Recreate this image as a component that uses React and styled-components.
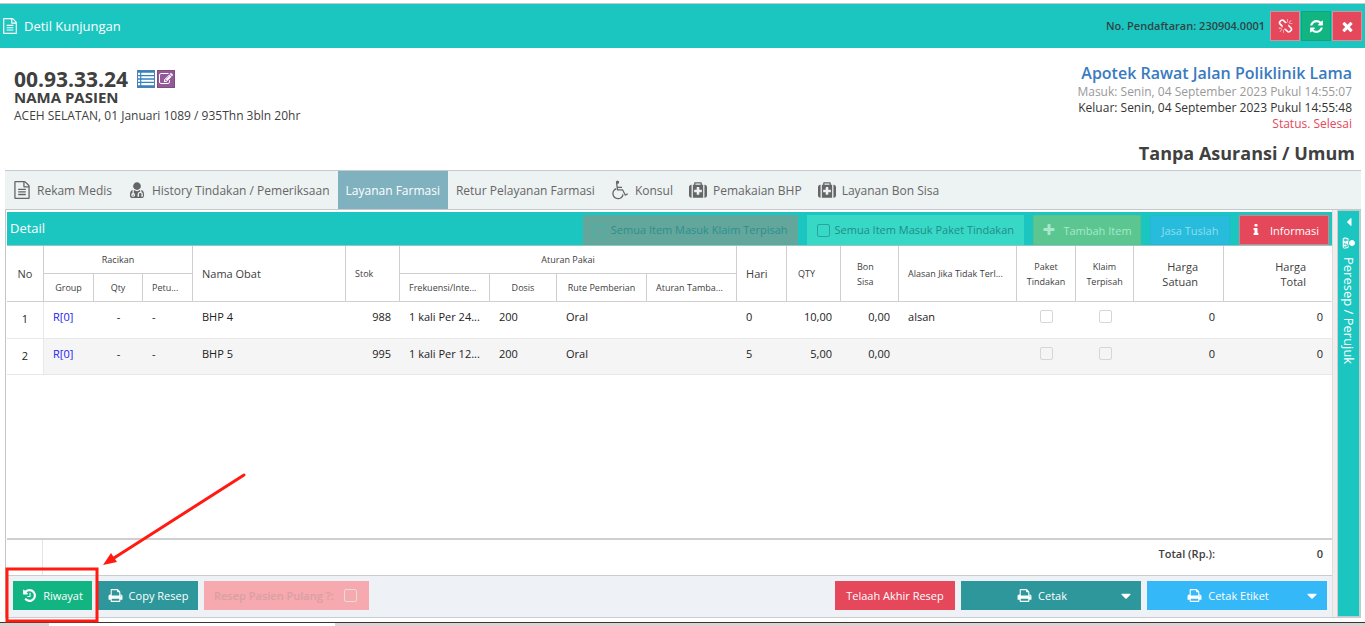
import React from 'react';
import styled, { createGlobalStyle, css } from 'styled-components';

const GlobalStyle = createGlobalStyle`
    * {
        box-sizing: border-box;
    }

    body {
        margin: 0;
        background-color: #fff;
        color: #404040;
        font-family: "Open Sans", "Noto Sans", sans-serif;
        font-size: 13px;
        line-height: 18px;
    }

    button, input {
        font-family: inherit;
    }
`;

const ICONS = {
    file: 'M1596 380q28 28 48 76t20 88v1152q0 40-28 68t-68 28h-1344q-40 0-68-28t-28-68v-1600q0-40 28-68t68-28h896q40 0 88 20t76 48zm-444-244v376h376q-10-29-22-41l-313-313q-12-12-41-22zm384 1528v-1024h-416q-40 0-68-28t-28-68v-416h-768v1536h1280zm-1024-864q0-14 9-23t23-9h704q14 0 23 9t9 23v64q0 14-9 23t-23 9h-704q-14 0-23-9t-9-23v-64zm736 224q14 0 23 9t9 23v64q0 14-9 23t-23 9h-704q-14 0-23-9t-9-23v-64q0-14 9-23t23-9h704zm0 256q14 0 23 9t9 23v64q0 14-9 23t-23 9h-704q-14 0-23-9t-9-23v-64q0-14 9-23t23-9h704z',
    doctor: 'M576 1408q0 26-19 45t-45 19-45-19-19-45 19-45 45-19 45 19 19 45zm1024 37q0 121-73 190t-194 69h-874q-121 0-194-69t-73-190q0-68 5.500-131t24-138 47.500-132.500 81-103 120-60.500q-22 52-22 120v203q-58 20-93 70t-35 111q0 80 56 136t136 56 136-56 56-136q0-61-35.500-111t-92.500-70v-203q0-62 25-93 132 104 295 104t295-104q25 31 25 93v64q-106 0-181 75t-75 181v89q-32 29-32 71 0 40 28 68t68 28 68-28 28-68q0-42-32-71v-89q0-52 38-90t90-38 90 38 38 90v89q-32 29-32 71 0 40 28 68t68 28 68-28 28-68q0-42-32-71v-89q0-68-34.500-127.500t-93.500-93.500q0-10 .5-42.500t0-48-2.500-41.500-7-47-13-40q68 15 120 60.500t81 103 47.500 132.500 24 138 5.500 131zm-320-933q0 159-112.500 271.500t-271.500 112.500-271.500-112.500-112.500-271.500 112.500-271.500 271.500-112.500 271.500 112.500 112.500 271.500z',
    times: 'M1490 1322q0 40-28 68l-136 136q-28 28-68 28t-68-28l-294-294-294 294q-28 28-68 28t-68-28l-136-136q-28-28-28-68t28-68l294-294-294-294q-28-28-28-68t28-68l136-136q28-28 68-28t68 28l294 294 294-294q28-28 68-28t68 28l136 136q28 28 28 68t-28 68l-294 294 294 294q28 28 28 68z',
    refresh: 'M1639 1056q0 5-1 7-64 268-268 434.500t-478 166.500q-146 0-282.500-55t-243.500-157l-129 129q-19 19-45 19t-45-19-19-45v-448q0-26 19-45t45-19h448q26 0 45 19t19 45-19 45l-137 137q71 66 161 102t187 36q134 0 250-65t186-179q11-17 53-117 8-23 30-23h192q13 0 22.500 9.500t9.500 22.500zm25-800v448q0 26-19 45t-45 19h-448q-26 0-45-19t-19-45 19-45l138-138q-148-137-349-137-134 0-250 65t-186 179q-11 17-53 117-8 23-30 23h-199q-13 0-22.500-9.500t-9.500-22.500v-7q65-268 270-434.500t480-166.500q146 0 284 55.500t245 156.500l130-129q19-19 45-19t45 19 19 45z',
    unlink: 'M503 1271l-256 256q-10 9-23 9-12 0-23-9-9-10-9-23t9-23l256-256q10-9 23-9t23 9q9 10 9 23t-9 23zm169 41v320q0 14-9 23t-23 9-23-9-9-23v-320q0-14 9-23t23-9 23 9 9 23zm-224-224q0 14-9 23t-23 9h-320q-14 0-23-9t-9-23 9-23 23-9h320q14 0 23 9t9 23zm1264 128q0 120-85 203l-147 146q-83 83-203 83-121 0-204-85l-334-335q-21-21-42-56l239-18 273 274q28 28 68 27.500t68-27.500l147-146q28-28 28-67 0-40-28-68l-274-275 18-239q35 21 56 42l336 336q84 86 84 204zm-617-724l-239 18-273-274q-28-28-68-28-39 0-68 27l-147 146q-28 28-28 67 0 40 28 68l274 274-18 240q-35-21-56-42l-336-336q-84-86-84-204 0-120 85-203l147-146q83-83 203-83 121 0 204 85l334 335q21 21 42 56zm633 84q0 14-9 23t-23 9h-320q-14 0-23-9t-9-23 9-23 23-9h320q14 0 23 9t9 23zm-544-544v320q0 14-9 23t-23 9-23-9-9-23v-320q0-14 9-23t23-9 23 9 9 23zm407 151l-256 256q-11 9-23 9t-23-9q-9-10-9-23t9-23l256-256q10-9 23-9t23 9q9 10 9 23t-9 23z',
    list: 'M0 200h240v240h-240zM370 200h1422v240h-1422zM0 584h240v240h-240zM370 584h1422v240h-1422zM0 968h240v240h-240zM370 968h1422v240h-1422zM0 1352h240v240h-240zM370 1352h1422v240h-1422z',
    edit: 'M888 1184l116-116-152-152-116 116v56h96v96h56zm440-720q-16-16-33 1l-350 350q-17 17-1 33t33-1l350-350q17-17 1-33zm80 594v190q0 119-84.500 203.500t-203.500 84.500h-832q-119 0-203.500-84.500t-84.500-203.500v-832q0-119 84.500-203.500t203.500-84.500h832q63 0 117 25 15 7 18 23 3 17-9 29l-49 49q-14 14-32 8-23-6-45-6h-832q-66 0-113 47t-47 113v832q0 66 47 113t113 47h832q66 0 113-47t47-113v-126q0-13 9-22l64-64q15-15 35-7t20 29zm-96-738l288 288-672 672h-288v-288zm444 132l-92 92-288-288 92-92q28-28 68-28t68 28l152 152q28 28 28 68t-28 68z',
    wheelchair: 'M1151 1221l102 204q-58 179-210 290t-339 111q-156 0-289.500-77.500t-211-211-77.500-289.500q0-181 104.500-330t274.500-211l17 131q-122 54-195 165.500t-73 244.500q0 185 131.500 316.500t316.500 131.500q126 0 232.500-65t165-175.500 49.500-236.500zm492-6l58 114-256 128q-13 7-29 7-40 0-57-35l-239-477h-472q-24 0-42.500-16.500t-21.500-40.500l-96-779q-2-17 6-42 14-51 57-82.500t97-31.500q66 0 113 47t47 113q0 69-52 117.500t-120 41.500l37 289h423v128h-407l16 128h455q40 0 57 35l228 455z',
    medkit: 'M1280 1088v-192q0-14-9-23t-23-9h-224v-224q0-14-9-23t-23-9h-192q-14 0-23 9t-9 23v224h-224q-14 0-23 9t-9 23v192q0 14 9 23t23 9h224v224q0 14 9 23t23 9h192q14 0 23-9t9-23v-224h224q14 0 23-9t9-23zm-640-704h512v-128h-512v128zm-384 0v1280h-32q-92 0-158-66t-66-158v-832q0-92 66-158t158-66h32zm1152 0v1280h-1024v-1280h128v-160q0-40 28-68t68-28h576q40 0 68 28t28 68v160h128zm384 224v832q0 92-66 158t-158 66h-32v-1280h32q92 0 158 66t66 158z',
    plus: 'M1600 736v192q0 40-28 68t-68 28h-416v416q0 40-28 68t-68 28h-192q-40 0-68-28t-28-68v-416h-416q-40 0-68-28t-28-68v-192q0-40 28-68t68-28h416v-416q0-40 28-68t68-28h192q40 0 68 28t28 68v416h416q40 0 68 28t28 68z',
    info: 'M1216 1344v128q0 26-19 45t-45 19h-512q-26 0-45-19t-19-45v-128q0-26 19-45t45-19h64v-384h-64q-26 0-45-19t-19-45v-128q0-26 19-45t45-19h384q26 0 45 19t19 45v576h64q26 0 45 19t19 45zm-128-1152v192q0 26-19 45t-45 19h-256q-26 0-45-19t-19-45v-192q0-26 19-45t45-19h256q26 0 45 19t19 45z',
    print: 'M448 1536h896v-256h-896v256zm0-640h896v-384h-160q-40 0-68-28t-28-68v-160h-640v640zm1152 64q0-26-19-45t-45-19-45 19-19 45 19 45 45 19 45-19 19-45zm128 0v416q0 13-9.500 22.500t-22.500 9.500h-224v160q0 40-28 68t-68 28h-960q-40 0-68-28t-28-68v-160h-224q-13 0-22.500-9.500t-9.500-22.500v-416q0-79 56.500-135.500t135.500-56.500h64v-544q0-40 28-68t68-28h672q40 0 88 20t76 48l152 152q28 28 48 76t20 88v256h64q79 0 135.500 56.500t56.500 135.500z',
    history: 'M1664 896q0 156-61 298t-164 245-245 164-298 61q-172 0-327-72.500t-264-204.500q-7-10-6.500-22.500t8.500-20.500l137-138q10-9 25-9 16 2 23 12 73 95 179 147t225 52q104 0 198.500-40.500t163.500-109.500 109.500-163.500 40.500-198.500-40.500-198.500-109.500-163.500-163.500-109.500-198.500-40.500q-98 0-188 35.500t-160 101.500l137 138q31 30 14 69-17 40-59 40h-448q-26 0-45-19t-19-45v-448q0-42 40-59 39-17 69 14l130 129q107-101 244.500-156.500t284.500-55.500q156 0 298 61t245 164 164 245 61 298zm-640-288v448q0 14-9 23t-23 9h-320q-14 0-23-9t-9-23v-64q0-14 9-23t23-9h224v-352q0-14 9-23t23-9h64q14 0 23 9t9 23z',
    down: 'M1408 704q0 26-19 45l-448 448q-19 19-45 19t-45-19l-448-448q-19-19-19-45t19-45 45-19h896q26 0 45 19t19 45z',
    left: 'M1216 448v896q0 26-19 45t-45 19-45-19l-448-448q-19-19-19-45t19-45l448-448q19-19 45-19t45 19 19 45z',
};

const Svg = styled.svg`
    flex: none;
    display: block;
    width: ${(p) => p.$size}px;
    height: ${(p) => p.$size}px;
    fill: currentColor;
    overflow: visible;
`;

function Icon({ name, size = 16 }) {
    return (
        <Svg $size={size} viewBox="0 0 1792 1792" aria-hidden="true">
            <path d={ICONS[name]} />
        </Svg>
    );
}

const Page = styled.div`
    position: relative;
    display: flex;
    flex-direction: column;
    min-height: 100vh;
    padding-top: 3px;
`;

/* ---------- title bar ---------- */

const TitleBar = styled.header`
    display: flex;
    align-items: center;
    height: 45px;
    padding: 0 3px 0 2px;
    border-top: 1px solid #c4cccc;
    background-color: #1bc6c1;
    color: #fff;
`;

const Title = styled.h1`
    display: flex;
    align-items: center;
    gap: 6px;
    flex: 1;
    margin: 0;
    font-size: 13px;
    font-weight: 400;
`;

const RegNumber = styled.span`
    margin-right: 5px;
    color: #2f4546;
    font-size: 11px;
    font-weight: 600;
`;

const Tools = styled.div`
    display: flex;
    gap: 1px;
`;

const ToolButton = styled.button`
    display: flex;
    align-items: center;
    justify-content: center;
    width: 30px;
    height: 30px;
    padding: 0;
    border: 1px solid ${(p) => p.$border};
    background-color: ${(p) => p.$bg};
    color: #fff;
`;

/* ---------- patient ---------- */

const Patient = styled.section`
    display: flex;
    justify-content: space-between;
    height: 122px;
    padding: 16px 10px 0 14px;
`;

const Identity = styled.div`
    padding-top: 4px;
`;

const NumberLine = styled.div`
    display: flex;
    align-items: center;
    gap: 9px;
    height: 22px;
`;

const RecordNumber = styled.strong`
    font-size: 21px;
    font-weight: 700;
    line-height: 22px;
`;

const RecordActions = styled.div`
    display: flex;
    gap: 2px;
`;

const SquareButton = styled.button`
    display: flex;
    align-items: center;
    justify-content: center;
    width: 18px;
    height: 18px;
    padding: 0;
    border: 1px solid ${(p) => p.$border};
    background-color: ${(p) => p.$bg};
    color: #fff;
`;

const PatientName = styled.div`
    font-size: 15px;
    font-weight: 700;
    line-height: 15px;
`;

const PatientInfo = styled.div`
    font-size: 12px;
    line-height: 22px;
`;

const Visit = styled.div`
    text-align: right;
`;

const VisitDetail = styled.div`
    padding-right: 3px;
    font-size: 12px;
    line-height: 16px;
`;

const Unit = styled.div`
    margin-bottom: 2px;
    color: #3a7abf;
    font-size: 16px;
    font-weight: 600;
    line-height: 18px;
`;

const VisitLine = styled.div`
    color: ${(p) => p.$color};
`;

const Insurance = styled.div`
    margin-top: 9px;
    font-size: 18px;
    font-weight: 700;
    line-height: 24px;
`;

/* ---------- tabs ---------- */

const Tabs = styled.nav`
    display: flex;
    height: 40px;
    margin: 0 4px 0 5px;
    border-top: 1px solid #c5cbcc;
    border-bottom: 1px solid #c5c9ca;
    background-color: #edf2f2;
`;

const Tab = styled.button`
    display: flex;
    align-items: center;
    gap: 6px;
    padding: 0 8px;
    border: 0;
    background-color: ${(p) => (p.$active ? '#7fb1bf' : 'transparent')};
    color: ${(p) => (p.$active ? '#fff' : '#666')};
    font-size: 12px;
    white-space: nowrap;
`;

/* ---------- main panel ---------- */

const Body = styled.main`
    display: flex;
    flex: 1;
    margin: 0 4px 0 5px;
    border-left: 1px solid #c5c5c5;
    border-bottom: 1px solid #c9cdd0;
`;

const Panel = styled.section`
    display: flex;
    flex: 1;
    flex-direction: column;
    min-width: 0;
    padding: 2px 0 0 1px;
`;

const Splitter = styled.div`
    width: 6px;
    border-left: 1px solid #ddd;
    border-right: 1px solid #d5c9c9;
    background-color: #eeeeee;
`;

const PanelHead = styled.div`
    display: flex;
    align-items: flex-end;
    height: 34px;
    padding: 0 3px;
    border-bottom: 1px solid #8fc9c7;
    background-color: #1bc6c1;
`;

const PanelTitle = styled.h2`
    flex: 1;
    margin: 0;
    color: #fff;
    font-size: 13px;
    font-weight: 400;
    line-height: 34px;
`;

const PanelTools = styled.div`
    display: flex;
    gap: 9px;
    height: 30px;
`;

const CheckField = styled.label`
    display: flex;
    align-items: center;
    gap: 5px;
    padding: 0 10px;
    background-color: ${(p) => p.$bg};
    color: ${(p) => p.$color};
    font-size: 11px;
    font-weight: ${(p) => p.$weight || 400};
    white-space: nowrap;
`;

const Check = styled.input.attrs({ type: 'checkbox' })`
    appearance: none;
    flex: none;
    width: 13px;
    height: 13px;
    margin: 0;
    border: 1px solid ${(p) => p.$border || '#d6d6d6'};
    border-radius: 2px;
    background-color: transparent;
`;

const HeadButton = styled.button`
    display: flex;
    align-items: center;
    justify-content: center;
    gap: 7px;
    width: ${(p) => p.$width}px;
    padding: 0;
    border: 1px solid ${(p) => p.$border};
    background-color: ${(p) => p.$bg};
    color: ${(p) => p.$color || '#fff'};
    font-size: 11px;
    white-space: nowrap;
`;

/* ---------- table ---------- */

const Table = styled.table`
    width: 100%;
    border-collapse: separate;
    border-spacing: 0;
    table-layout: fixed;
`;

const Th = styled.th`
    height: 28px;
    padding: 0 ${(p) => p.$padRight || 9}px 0 ${(p) => p.$padLeft || 9}px;
    border-right: 1px solid ${(p) => (p.$last ? 'transparent' : '#cfcfcf')};
    border-bottom: 1px solid #cfcfcf;
    color: #404040;
    font-size: ${(p) => (p.$large ? 11 : 9)}px;
    font-weight: 400;
    line-height: 15px;
    text-align: ${(p) => p.$align || 'left'};
    white-space: nowrap;
`;

const Td = styled.td`
    height: ${(p) => (p.$tall ? 37 : 36)}px;
    padding: 7px 9px 0;
    border-bottom: 1px solid #e8e8e8;
    background-color: ${(p) => (p.$alt ? '#f5f5f5' : '#fff')};
    color: #222;
    font-size: 11px;
    line-height: 15px;
    text-align: ${(p) => p.$align || 'left'};
    vertical-align: top;
    white-space: nowrap;

    ${(p) => p.$number && css`
        padding: 9px 0 0;
        border-right: 1px solid #e8e8e8;
        background-color: #fff;
        text-align: center;
    `}
`;

const GroupLink = styled.a`
    color: #1c1cf0;
    text-decoration: none;
`;

const CellCheck = styled(Check)`
    display: block;
    margin: 1px auto 0;
`;

const Blank = styled.div`
    flex: 1;
`;

const Summary = styled.div`
    display: flex;
    height: 37px;
    border-top: 2px solid #cfcfcf;
    color: #404040;
    font-size: 11px;
    font-weight: 600;
    line-height: 28px;
`;

const SummaryGutter = styled.div`
    width: 36px;
    border-right: 1px solid #e4e4e4;
`;

const SummaryLabel = styled.div`
    flex: 1;
    text-align: right;
`;

const SummaryValue = styled.div`
    width: 117px;
    padding-right: 9px;
    text-align: right;
`;

/* ---------- bottom toolbar ---------- */

const BottomBar = styled.footer`
    display: flex;
    align-items: flex-start;
    height: 42px;
    padding: 5px 5px 0 6px;
    border-top: 1px solid #c9cdd0;
    background-color: #eef2f7;
`;

const ActionButton = styled.button`
    display: flex;
    align-items: center;
    justify-content: center;
    gap: 6px;
    width: ${(p) => p.$width}px;
    height: 29px;
    margin-right: 6px;
    padding: 0 7px;
    border: 0;
    background-color: ${(p) => p.$bg};
    color: #fff;
    font-size: 11px;
    white-space: nowrap;

    &:last-child {
        margin-right: 0;
    }
`;

const MenuLabel = styled.span`
    display: flex;
    flex: 1;
    align-items: center;
    justify-content: center;
    gap: 6px;
    padding-left: 4px;
`;

const PulangField = styled(CheckField)`
    justify-content: space-between;
    width: 165px;
    height: 29px;
    padding: 0 12px 0 10px;
`;

const Spacer = styled.div`
    flex: 1;
`;

/* ---------- collapsed side panel ---------- */

const Side = styled.aside`
    display: flex;
    flex-direction: column;
    align-items: center;
    gap: 7px;
    width: 23px;
    padding-top: 4px;
    border: 1px solid #b8cfce;
    border-left: 0;
    border-right-width: 2px;
    background-color: #1bc6c1;
    color: #fff;
`;

const SideToggle = styled.button`
    padding: 0;
    border: 0;
    background: none;
    color: inherit;
`;

const SideIcon = styled.span`
    display: flex;
    transform: rotate(90deg);
`;

const SideTitle = styled.span`
    font-size: 13px;
    line-height: 18px;
    writing-mode: vertical-rl;
`;

const Taskbar = styled.div`
    display: flex;
    height: 4px;
    margin-top: 4px;
    border-top: 1px solid #3b3433;
    background-color: #dad5d3;
`;

const TaskItem = styled.div`
    width: 286px;
    margin-left: 49px;
    background-color: #fff;
`;

const Annotation = styled.svg`
    position: absolute;
    bottom: 0;
    left: 0;
    pointer-events: none;
`;

const columns = [37, 50, 49, 50, 153, 54, 90, 67, 90, 90, 50, 54, 58, 118, 59, 58, 90];

const rows = [
    { no: 1, obat: 'BHP 4', stok: '988', frekuensi: '1 kali Per 24...', hari: '0', qty: '10,00', alasan: 'alsan' },
    { no: 2, obat: 'BHP 5', stok: '995', frekuensi: '1 kali Per 12...', hari: '5', qty: '5,00', alasan: '' },
];

function Header() {
    return (
        <TitleBar>
            <Title>
                <Icon name="file" />
                Detil Kunjungan
            </Title>
            <RegNumber>No. Pendaftaran: 230904.0001</RegNumber>
            <Tools>
                <ToolButton $bg="#e5475b" $border="#d9909a" aria-label="Putuskan"><Icon name="unlink" size={15} /></ToolButton>
                <ToolButton $bg="#12b482" $border="#11a478" aria-label="Muat ulang"><Icon name="refresh" size={15} /></ToolButton>
                <ToolButton $bg="#e5475b" $border="#d9909a" aria-label="Tutup"><Icon name="times" size={15} /></ToolButton>
            </Tools>
        </TitleBar>
    );
}

function PatientHeader() {
    return (
        <Patient>
            <Identity>
                <NumberLine>
                    <RecordNumber>00.93.33.24</RecordNumber>
                    <RecordActions>
                        <SquareButton $bg="#2f82c4" $border="#5a7fa6" aria-label="Daftar"><Icon name="list" /></SquareButton>
                        <SquareButton $bg="#95589a" $border="#7d5079" aria-label="Ubah"><Icon name="edit" size={14} /></SquareButton>
                    </RecordActions>
                </NumberLine>
                <PatientName>NAMA PASIEN</PatientName>
                <PatientInfo>ACEH SELATAN, 01 Januari 1089 / 935Thn 3bln 20hr</PatientInfo>
            </Identity>
            <Visit>
                <VisitDetail>
                    <Unit>Apotek Rawat Jalan Poliklinik Lama</Unit>
                    <VisitLine $color="#999">Masuk: Senin, 04 September 2023 Pukul 14:55:07</VisitLine>
                    <VisitLine $color="#333">Keluar: Senin, 04 September 2023 Pukul 14:55:48</VisitLine>
                    <VisitLine $color="#e5475b">Status. Selesai</VisitLine>
                </VisitDetail>
                <Insurance>Tanpa Asuransi / Umum</Insurance>
            </Visit>
        </Patient>
    );
}

function TabBar() {
    return (
        <Tabs>
            <Tab><Icon name="file" size={18} />Rekam Medis</Tab>
            <Tab><Icon name="doctor" size={18} />History Tindakan / Pemeriksaan</Tab>
            <Tab $active>Layanan Farmasi</Tab>
            <Tab>Retur Pelayanan Farmasi</Tab>
            <Tab><Icon name="wheelchair" size={18} />Konsul</Tab>
            <Tab><Icon name="medkit" size={18} />Pemakaian BHP</Tab>
            <Tab><Icon name="medkit" size={18} />Layanan Bon Sisa</Tab>
        </Tabs>
    );
}

function ItemTable() {
    return (
        <Table>
            <colgroup>
                {columns.map((width, i) => <col key={i} style={{ width }} />)}
                <col />
            </colgroup>
            <thead>
                <tr>
                    <Th rowSpan={2} $large $align="center">No</Th>
                    <Th colSpan={3} $align="center">Racikan</Th>
                    <Th rowSpan={2} $large>Nama Obat</Th>
                    <Th rowSpan={2}>Stok</Th>
                    <Th colSpan={4} $align="center">Aturan Pakai</Th>
                    <Th rowSpan={2} $large>Hari</Th>
                    <Th rowSpan={2} $padLeft={11}>QTY</Th>
                    <Th rowSpan={2} $padLeft={16}>Bon<br />Sisa</Th>
                    <Th rowSpan={2}>Alasan Jika Tidak Terl...</Th>
                    <Th rowSpan={2} $align="center">Paket<br />Tindakan</Th>
                    <Th rowSpan={2} $align="center">Klaim<br />Terpisah</Th>
                    <Th rowSpan={2} $large $align="right" $padRight={25}>Harga<br />Satuan</Th>
                    <Th rowSpan={2} $large $last $align="right" $padRight={25}>Harga<br />Total</Th>
                </tr>
                <tr>
                    <Th $align="center">Group</Th>
                    <Th $align="center">Qty</Th>
                    <Th>Petu...</Th>
                    <Th>Frekuensi/Inte...</Th>
                    <Th $align="center">Dosis</Th>
                    <Th $align="center">Rute Pemberian</Th>
                    <Th>Aturan Tamba...</Th>
                </tr>
            </thead>
            <tbody>
                {rows.map((row, i) => {
                    const cell = { $alt: i % 2 === 1, $tall: i === 0 };
                    return (
                        <tr key={row.no}>
                            <Td {...cell} $number>{row.no}</Td>
                            <Td {...cell}><GroupLink href="#">R[0]</GroupLink></Td>
                            <Td {...cell} $align="center">-</Td>
                            <Td {...cell}>-</Td>
                            <Td {...cell}>{row.obat}</Td>
                            <Td {...cell} $align="right">{row.stok}</Td>
                            <Td {...cell}>{row.frekuensi}</Td>
                            <Td {...cell}>200</Td>
                            <Td {...cell}>Oral</Td>
                            <Td {...cell} />
                            <Td {...cell}>{row.hari}</Td>
                            <Td {...cell} $align="right">{row.qty}</Td>
                            <Td {...cell} $align="right">0,00</Td>
                            <Td {...cell}>{row.alasan}</Td>
                            <Td {...cell}><CellCheck aria-label="Paket Tindakan" /></Td>
                            <Td {...cell}><CellCheck aria-label="Klaim Terpisah" /></Td>
                            <Td {...cell} $align="right">0</Td>
                            <Td {...cell} $align="right">0</Td>
                        </tr>
                    );
                })}
            </tbody>
        </Table>
    );
}

function DetailPanel() {
    return (
        <Panel>
            <PanelHead>
                <PanelTitle>Detail</PanelTitle>
                <PanelTools>
                    <CheckField $bg="#62a69c" $color="#2d908c" $weight={500}>
                        <Check $border="#46b3ab" />
                        Semua Item Masuk Klaim Terpisah
                    </CheckField>
                    <CheckField $bg="#38d8c6" $color="#1f8d86">
                        <Check $border="#25a69c" />
                        Semua Item Masuk Paket Tindakan
                    </CheckField>
                    <HeadButton $width={108} $bg="#5bc68f" $border="#5cbf8c" $color="#a5e8cd"><Icon name="plus" size={14} />Tambah Item</HeadButton>
                    <HeadButton $width={80} $bg="#27bcdc" $border="#27b6d8" $color="#8fdcee">Jasa Tuslah</HeadButton>
                    <HeadButton $width={90} $bg="#e5475b" $border="#d5808b"><Icon name="info" size={14} />Informasi</HeadButton>
                </PanelTools>
            </PanelHead>
            <ItemTable />
            <Blank />
            <Summary>
                <SummaryGutter />
                <SummaryLabel>Total (Rp.):</SummaryLabel>
                <SummaryValue>0</SummaryValue>
            </Summary>
            <BottomBar>
                <ActionButton $width={79} $bg="#12b482"><Icon name="history" size={15} />Riwayat</ActionButton>
                <ActionButton $width={100} $bg="#2d979c"><Icon name="print" size={15} />Copy Resep</ActionButton>
                <PulangField $bg="#f6a9ae" $color="#d9a0a4" $weight={600}>
                    Resep Pasien Pulang ?:
                    <Check $border="#e6dcda" />
                </PulangField>
                <Spacer />
                <ActionButton $width={120} $bg="#e5475b">Telaah Akhir Resep</ActionButton>
                <ActionButton $width={180} $bg="#2d979c">
                    <MenuLabel><Icon name="print" size={15} />Cetak</MenuLabel>
                    <Icon name="down" />
                </ActionButton>
                <ActionButton $width={180} $bg="#35b8f7">
                    <MenuLabel><Icon name="print" size={15} />Cetak Etiket</MenuLabel>
                    <Icon name="down" />
                </ActionButton>
            </BottomBar>
        </Panel>
    );
}

function App() {
    return (
        <Page>
            <GlobalStyle />
            <Header />
            <PatientHeader />
            <TabBar />
            <Body>
                <DetailPanel />
                <Splitter />
                <Side>
                    <SideToggle aria-label="Buka panel"><Icon name="left" size={14} /></SideToggle>
                    <SideIcon><Icon name="doctor" size={14} /></SideIcon>
                    <SideTitle>Peresep / Perujuk</SideTitle>
                </Side>
            </Body>
            <Taskbar>
                <TaskItem />
            </Taskbar>
            <Annotation width="250" height="160" viewBox="0 0 250 160" aria-hidden="true">
                <rect x="7" y="103" width="90" height="52" fill="none" stroke="#ff1a12" strokeWidth="3" />
                <path d="M244 9L114 92" stroke="#ff1a12" strokeWidth="3" strokeLinecap="round" />
                <path d="M103 99L111 87L117 96Z" fill="#ff1a12" />
            </Annotation>
        </Page>
    );
}

export default App;
